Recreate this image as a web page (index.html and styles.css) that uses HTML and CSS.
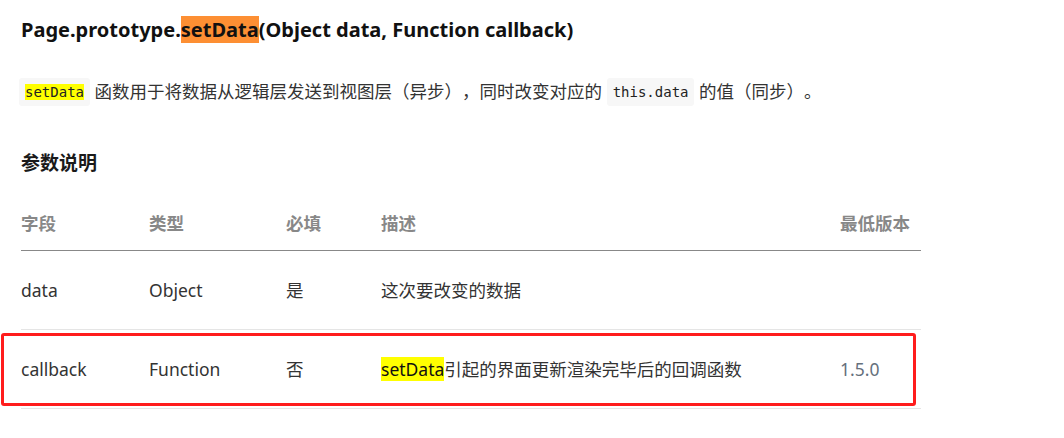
FILE: index.html
```html
<!DOCTYPE html>
<html lang="zh-CN">
<head>
<meta charset="utf-8">
<title>setData</title>
<link rel="stylesheet" href="styles.css">
</head>
<body>
<div class="doc">
  <h1 class="title">Page.prototype.<span class="hl-orange">setData</span>(Object data, Function callback)</h1>
  <p class="desc"><code class="code"><span class="hl-yellow">setData</span></code> 函数用于将数据从逻辑层发送到视图层（异步），同时改变对应的 <code class="code">this.data</code> 的值（同步）。</p>
  <h3 class="sub">参数说明</h3>
  <table class="params">
    <colgroup>
      <col class="c1"><col class="c2"><col class="c3"><col class="c4"><col class="c5">
    </colgroup>
    <thead>
      <tr><th>字段</th><th>类型</th><th>必填</th><th>描述</th><th>最低版本</th></tr>
    </thead>
    <tbody>
      <tr><td>data</td><td>Object</td><td>是</td><td>这次要改变的数据</td><td></td></tr>
      <tr><td>callback</td><td>Function</td><td>否</td><td><span class="hl-yellow dark">setData</span>引起的界面更新渲染完毕后的回调函数</td><td class="ver">1.5.0</td></tr>
    </tbody>
  </table>
  <div class="mark"></div>
</div>
</body>
</html>
```

FILE: styles.css
```css
html, body {
  margin: 0;
  padding: 0;
  background: #ffffff;
}
body {
  font-family: "Noto Sans", "Noto Sans CJK SC", sans-serif;
  color: #333333;
  text-spacing-trim: space-all;
}
.doc {
  position: relative;
  padding: 15px 0 30px 21px;
  width: 900px;
}
.title {
  margin: 0;
  font-size: 20px;
  line-height: 30px;
  font-weight: 700;
  color: #111111;
}
.hl-orange {
  background: #fd8f33;
}
.desc {
  margin: 32px 0 0 -2px;
  font-size: 17.5px;
  line-height: 28px;
  color: #333333;
}
.code {
  display: inline-block;
  font-family: "DejaVu Sans Mono", "Liberation Mono", monospace;
  font-size: 14px;
  line-height: 16px;
  padding: 6px 6px;
  background: #f7f7f7;
  border-radius: 3px;
  color: #222222;
  vertical-align: 1px;
}
.hl-yellow {
  background: #ffff00;
}
.sub {
  margin: 44px 0 0 0;
  font-size: 19px;
  line-height: 26px;
  font-weight: 700;
  color: #1a1a1a;
}
.params {
  margin-top: 20px;
  width: 900px;
  border-collapse: collapse;
  table-layout: fixed;
  font-size: 17.5px;
}
.c1 { width: 128px; }
.c2 { width: 137px; }
.c3 { width: 95px; }
.c4 { width: 459px; }
.c5 { width: 81px; }
.params th {
  text-align: left;
  font-weight: 700;
  color: #888888;
  padding: 14px 0;
  line-height: 26px;
  border-bottom: 1px solid #888888;
}
.params td {
  padding: 27px 0;
  line-height: 24px;
  border-bottom: 1px solid #e5e5e5;
  color: #333333;
}
.params .dark {
  color: #111111;
}
.params .ver {
  color: #66707c;
}
.mark {
  position: absolute;
  left: 1px;
  top: 333px;
  width: 909px;
  height: 67px;
  border: 3px solid #ff1c1c;
  border-radius: 3px;
}
```
